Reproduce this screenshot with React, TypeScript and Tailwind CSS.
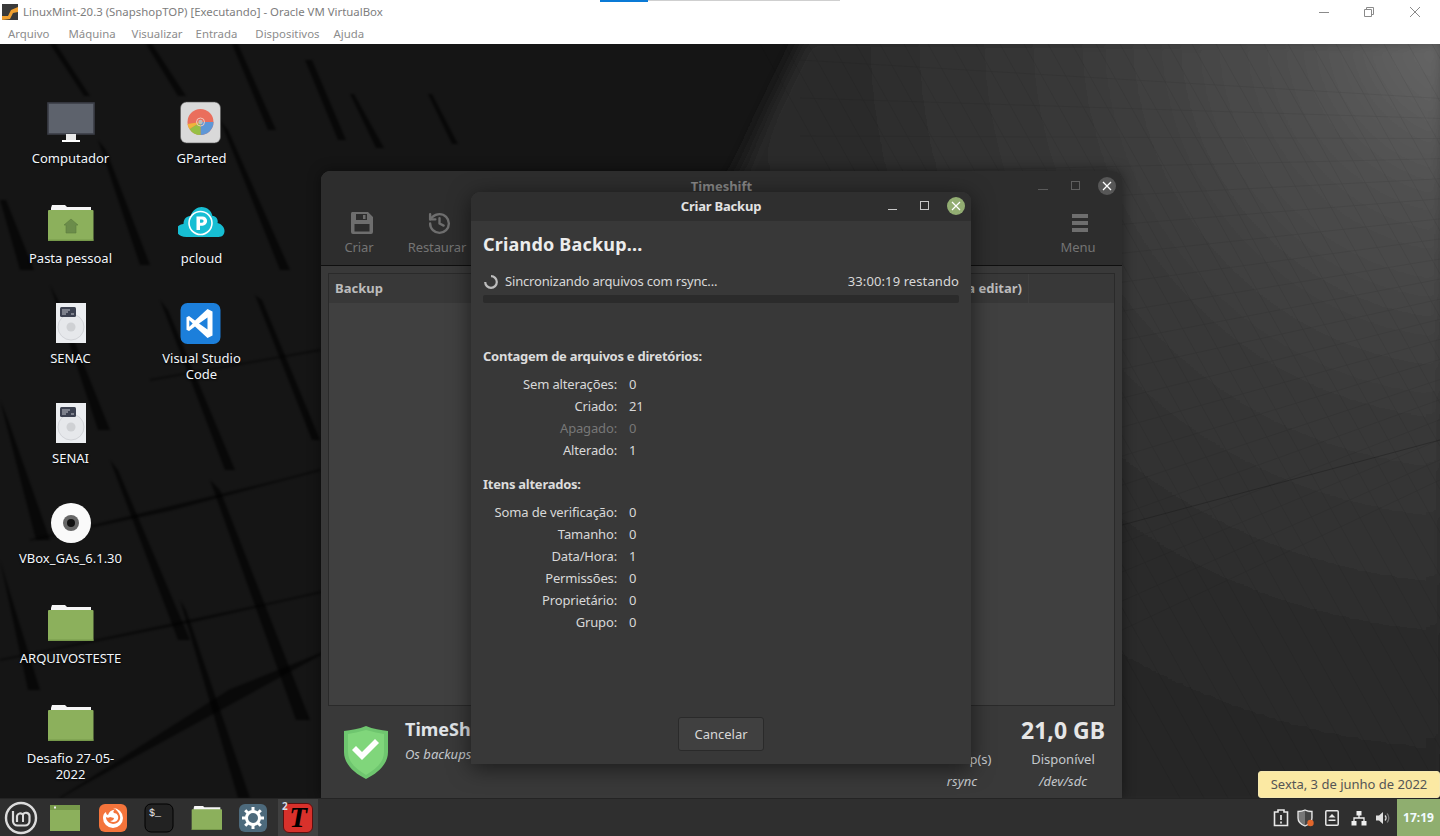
import { History } from "lucide-react";

const uiFont = "font-['Noto_Sans',sans-serif]";

// fan of lines on the lit part of the wallpaper
const fanLines = Array.from({ length: 20 }, (_, i) => {
  const y = 60 + i * 38;
  const slope = 0.06 - i * 0.028;
  return { y1: y, y2: y + slope * 640 };
});
const steepLines = Array.from({ length: 46 }, (_, i) => 760 + i * 24);

const shards = [
  "M50 44 L56 44 L90 96 L84 96Z",
  "M146 44 L152 44 L186 96 L178 96Z",
  "M350 94 L354 94 L384 148 L376 148Z",
  "M428 94 L432 94 L458 144 L452 144Z",
  "M232 44 L238 44 L276 130 L268 130Z",
  "M305 60 L312 60 L346 140 L338 140Z",
  "M0 200 L6 200 L34 270 L20 270Z",
  "M98 140 L106 150 L150 265 L140 265Z",
  "M220 120 L228 130 L290 270 L280 270Z",
  "M50 285 L58 300 L110 430 L98 430Z",
  "M160 300 L168 310 L235 470 L225 470Z",
  "M255 295 L262 300 L320 440 L312 440Z",
  "M0 400 L8 420 L50 540 L36 540Z",
  "M110 460 L118 470 L190 640 L178 640Z",
  "M210 480 L220 490 L310 720 L296 720Z",
  "M0 560 L6 580 L40 690 L28 690Z",
  "M180 600 L186 610 L250 798 L238 798Z",
];

function Wallpaper() {
  return (
    <svg className="absolute inset-0 h-full w-full" viewBox="0 44 1440 754" preserveAspectRatio="none">
      <defs>
        <radialGradient id="lit" gradientUnits="userSpaceOnUse" cx="1470" cy="30" r="760">
          <stop offset="0" stopColor="#6c6c6c" />
          <stop offset="0.2" stopColor="#525252" />
          <stop offset="0.5" stopColor="#3a3a3a" />
          <stop offset="0.8" stopColor="#2c2c2c" />
          <stop offset="1" stopColor="#272727" />
        </radialGradient>
        <filter id="edge">
          <feGaussianBlur stdDeviation="9" />
        </filter>
        <filter id="soft">
          <feGaussianBlur stdDeviation="0.9" />
        </filter>
      </defs>
      <rect x="0" y="44" width="1440" height="754" fill="#151515" />
      <path d="M806 34 L1450 34 L1450 810 L900 810 L600 400 L740 170Z" fill="url(#lit)" filter="url(#edge)" />
      <g filter="url(#soft)" fill="#060606" opacity="0.6">
        {shards.map((d) => (
          <path key={d} d={d} />
        ))}
      </g>
      <g stroke="#070707" strokeWidth="1.4" opacity="0.55" filter="url(#soft)">
        <path d="M0 660 L190 622 L330 590" />
        <path d="M60 798 L230 690 L330 650" />
        <path d="M30 540 L170 510 L320 470" />
        <path d="M150 380 L320 350" />
      </g>
      <g stroke="#000" strokeWidth="0.6" opacity="0.1">
        {fanLines.map((l) => (
          <line key={l.y1} x1="800" y1={l.y1} x2="1440" y2={l.y2} />
        ))}
        {steepLines.map((x) => (
          <line key={x} x1={x} y1="44" x2={x + 420} y2="798" />
        ))}
      </g>
      <path d="M1122 525 L1440 440" stroke="#111" strokeWidth="1" opacity="0.3" />
    </svg>
  );
}

function Folder({ home = false, size = 48 }: { home?: boolean; size?: number }) {
  return (
    <svg width={size} height={size} viewBox="0 0 48 48">
      <path d="M4 9 L5 6 H18 L20 8 H44 V12 H4Z" fill="#f6f6f6" />
      <rect x="1" y="11" width="45.5" height="31" rx="1" fill="#8cb05c" />
      <rect x="1" y="40.5" width="45.5" height="1.5" fill="#76994a" />
      {home && <path d="M24 20 L31 26 H29 V34 H19 V26 H17Z" fill="#6b8c4a" stroke="#5d7c3e" strokeWidth="0.6" />}
    </svg>
  );
}

function Monitor() {
  return (
    <svg width="48" height="48" viewBox="0 -3 48 48">
      <rect x="1" y="1" width="46" height="31" fill="#5d626c" stroke="#3b3e47" strokeWidth="1.6" />
      <path d="M19 32 H29 V38 H19Z" fill="#e9e9e9" />
      <rect x="15" y="38" width="18" height="2" fill="#fff" />
    </svg>
  );
}

function GParted() {
  return (
    <svg width="48" height="48" viewBox="1.5 0 48 48">
      <rect x="4" y="3" width="40" height="41" rx="6" fill="#d9d9d9" stroke="#555" strokeWidth="0.6" />
      <circle cx="24" cy="23" r="13" fill="#ea6e5c" />
      <path d="M24 23 L37 23 A13 13 0 0 1 24 36Z" fill="#5e97d6" />
      <path d="M24 23 L24 36 A13 13 0 0 1 13 30Z" fill="#98bf45" />
      <path d="M24 23 L13 30 A13 13 0 0 1 11 25Z" fill="#f0b43c" />
      <circle cx="24" cy="23" r="4" fill="none" stroke="#f3c6bc" strokeWidth="1" />
      <circle cx="24" cy="23" r="2.2" fill="#bdbdbd" />
    </svg>
  );
}

function PCloud() {
  return (
    <svg width="48" height="48" viewBox="1.5 -1 48 48">
      <path d="M10 37 C3 37 0 33 0 30 C0 27 3 24 7 24 C7 18 11 16 14 16 C16 10 21 7 25 7 C31 7 35 11 36 16 C40 16 42 20 41 23 C45 24 48 27 48 31 C48 34 46 37 42 37Z" fill="#17bed3" />
      <circle cx="24" cy="23" r="11.5" fill="none" stroke="#fff" strokeWidth="1.6" />
      <path d="M20 16.5 H26 A4.6 4.6 0 0 1 26 25.7 H23.5 V30 H20Z M23.5 19.5 V22.7 H25.5 A1.6 1.6 0 0 0 25.5 19.5Z" fill="#fff" fillRule="evenodd" />
    </svg>
  );
}

function Hdd() {
  return (
    <svg width="48" height="48" viewBox="0 -1 48 48">
      <rect x="9" y="3" width="30" height="40" fill="#eceef1" />
      <circle cx="24" cy="27" r="13" fill="#e6e8eb" stroke="#d2d4d8" strokeWidth="1" />
      <circle cx="24" cy="27" r="4.5" fill="#cfd1d4" />
      <rect x="13" y="7" width="16" height="10" rx="1.5" fill="#3c4150" />
      <path d="M15 10 H23 M15 12 H21 M15 14 H19 M24 14 H27" stroke="#dfe1e6" strokeWidth="0.8" />
    </svg>
  );
}

function VsCode() {
  return (
    <svg width="48" height="48" viewBox="1.5 -1 48 48">
      <rect x="4" y="3" width="40" height="41" rx="7" fill="#1c7fdb" />
      <path d="M31 9 L36 11.5 V35.5 L31 38 L18.5 26.5 L12.5 31 L10 29.7 V17.3 L12.5 16 L18.5 20.5Z M31 17.5 L22.5 23.5 L31 29.5Z M12.8 20.3 V26.7 L16.2 23.5Z" fill="#fff" fillRule="evenodd" />
    </svg>
  );
}

function Disc() {
  return (
    <svg width="48" height="48" viewBox="0 0 48 48">
      <circle cx="24" cy="24" r="20" fill="#fafafa" />
      <circle cx="24" cy="24" r="8" fill="#666" />
      <circle cx="24" cy="24" r="4" fill="#111" />
    </svg>
  );
}

const desktopIcons = [
  { label: "Computador", icon: <Monitor /> },
  { label: "Pasta pessoal", icon: <Folder home /> },
  { label: "SENAC", icon: <Hdd /> },
  { label: "SENAI", icon: <Hdd /> },
  { label: "VBox_GAs_6.1.30", icon: <Disc /> },
  { label: "ARQUIVOSTESTE", icon: <Folder /> },
  { label: "Desafio 27-05-2022", icon: <Folder /> },
  { label: "GParted", icon: <GParted /> },
  { label: "pcloud", icon: <PCloud /> },
  { label: "Visual Studio Code", icon: <VsCode /> },
];

function DesktopIcons() {
  return (
    <div className="relative grid w-fit grid-flow-col grid-cols-[131px_131px] grid-rows-[repeat(7,100px)] pl-[5px] pt-[55px]">
      {desktopIcons.map((item) => (
        <div key={item.label} className="flex flex-col items-center">
          {item.icon}
          <div className="mt-[3px] w-[106px] text-center text-[13px] leading-[16px] text-[#f2f6fb] [text-shadow:0_1px_2px_#000]">
            {item.label}
          </div>
        </div>
      ))}
    </div>
  );
}

function FloppyIcon() {
  return (
    <svg className="ml-[5px]" width="24" height="24" viewBox="0 0 24 24">
      <path
        d="M2 1 H18 L23 6 V21 A2 2 0 0 1 21 23 H3 A2 2 0 0 1 1 21 V3 A2 2 0 0 1 2 1Z M6 3 V9 H17 V3Z M13 4 H15.5 V8 H13Z M4.5 13 V20.5 H19.5 V13Z"
        fill="#6e6e6e"
        fillRule="evenodd"
      />
    </svg>
  );
}

function ToolButton({ label, icon, className }: { label: string; icon: React.ReactNode; className: string }) {
  return (
    <div className={`flex flex-col items-center ${className}`}>
      <div className="flex h-[24px] items-center">{icon}</div>
      <div className="mt-[4px] text-[13px] leading-[16px] tracking-[-0.1px] text-[#747474]">{label}</div>
    </div>
  );
}

function Stat({ value, label, sub, className }: { value?: string; label: string; sub: string; className: string }) {
  return (
    <div className={`flex flex-col items-center ${className}`}>
      <div className="h-[30px] text-[23px] font-bold leading-[30px] text-[#e6e6e6]">{value}</div>
      <div className="mt-[4px] text-[13px] leading-[20px] text-[#c4c8cc]">{label}</div>
      <div className="mt-[2px] text-[13px] italic leading-[20px] text-[#c4c8cc]">{sub}</div>
    </div>
  );
}

function TimeshiftWindow() {
  return (
    <div className="absolute left-[321px] top-[127px] flex h-[627px] w-[801px] flex-col overflow-hidden rounded-t-[9px] bg-[#393939] shadow-[0_0_14px_rgba(0,0,0,0.45)]">
      <div className="flex h-[95px] flex-col border-b border-[#0f0f0f] bg-[#2d2d2d]">
        <div className="relative flex h-[30px] items-center justify-center pt-[1px]">
          <span className="text-[13px] font-bold text-[#868686]">Timeshift</span>
          <span className="absolute left-[717px] top-[18px] h-px w-[10px] bg-[#5a5a5a]" />
          <span className="absolute left-[750px] top-[10px] h-[9px] w-[9px] border border-[#5f5f5f]" />
          <span className="absolute left-[777px] top-[6px] flex h-[18px] w-[18px] items-center justify-center rounded-full bg-[#575757]">
            <svg width="10" height="10" viewBox="0 0 10 10">
              <path d="M1 1 L9 9 M9 1 L1 9" stroke="#fff" strokeWidth="1.3" />
            </svg>
          </span>
        </div>
        <div className="flex pt-[10px]">
          <ToolButton label="Criar" icon={<FloppyIcon />} className="ml-[18px] w-[40px]" />
          <ToolButton
            label="Restaurar"
            icon={<History className="ml-[5px]" size={25} strokeWidth={2.3} color="#6e6e6e" />}
            className="ml-[20px] w-[76px]"
          />
          <ToolButton
            label="Menu"
            icon={
              <svg className="ml-[4px]" width="24" height="24" viewBox="0 0 24 24">
                <path d="M4 3 H20 V7 H4Z M4 10 H20 V14 H4Z M4 17 H20 V21 H4Z" fill="#6e6e6e" />
              </svg>
            }
            className="ml-[573px] w-[60px]"
          />
        </div>
      </div>
      <div className="mx-[7px] mt-[7px] flex h-[433px] flex-col border border-[#2a2a2a] bg-[#404040]">
        <div className="flex h-[29px] items-center justify-between whitespace-nowrap bg-[#383838] pl-[6px] text-[13px] font-bold text-[#bcbcbc]">
          <span>Backup</span>
          <span className="mr-[85px] border-r border-[#3e3e3e] pr-[6px] leading-[29px]">a editar)</span>
        </div>
      </div>
      <div className="relative flex flex-1 items-start">
        <svg className="ml-[22px] mt-[20px]" width="46" height="53" viewBox="0 0 46 53">
          <path d="M23 0 C30 3 38 4 45 5 V26 C45 38 35 47 23 53 C11 47 1 38 1 26 V5 C8 4 16 3 23 0Z" fill="#6fc66f" />
          <path d="M23 4 C30 6 36 7 41 8 V26 C41 36 33 43 23 49 C13 43 5 36 5 26 V8 C10 7 16 6 23 4Z" fill="#80d67b" />
          <path d="M9 24 L13 20 L19 26 L32 13 L36 17 L19 34Z" fill="#fff" />
        </svg>
        <div className="ml-[16px] mt-[10px]">
          <div className="text-[18px] font-bold leading-[26px] text-[#e0e4e8]">TimeShift</div>
          <div className="mt-[3px] text-[13px] italic leading-[18px] text-[#c4c8cc]">Os backups</div>
        </div>
        <div className="absolute left-[600px] top-[9px] flex">
          <Stat label="Backup(s)" sub="rsync" className="w-[82px]" />
          <Stat value="21,0 GB" label="Disponível" sub="/dev/sdc" className="ml-[10px] w-[100px]" />
        </div>
      </div>
    </div>
  );
}

const countRows = [
  { label: "Sem alterações:", value: "0" },
  { label: "Criado:", value: "21" },
  { label: "Apagado:", value: "0", dim: true },
  { label: "Alterado:", value: "1" },
];

const changedRows = [
  { label: "Soma de verificação:", value: "0" },
  { label: "Tamanho:", value: "0" },
  { label: "Data/Hora:", value: "1" },
  { label: "Permissões:", value: "0" },
  { label: "Proprietário:", value: "0" },
  { label: "Grupo:", value: "0" },
];

function StatRows({ rows }: { rows: { label: string; value: string; dim?: boolean }[] }) {
  return (
    <div className="flex flex-col">
      {rows.map((row) => (
        <div
          key={row.label}
          className={`flex h-[22px] items-center text-[13px] tracking-[-0.15px] ${row.dim ? "text-[#777777]" : "text-[#d8d8d8]"}`}
        >
          <span className="w-[134px] whitespace-nowrap text-right">{row.label}</span>
          <span className="ml-[12px]">{row.value}</span>
        </div>
      ))}
    </div>
  );
}

function BackupDialog() {
  return (
    <div className="absolute left-[471px] top-[148px] flex h-[572px] w-[500px] flex-col overflow-hidden rounded-t-[9px] bg-[#383838] shadow-[0_4px_22px_rgba(0,0,0,0.55)]">
      <div className="relative flex h-[29px] shrink-0 items-center justify-center bg-[#2f2f2f]">
        <span className="text-[13px] font-bold tracking-[-0.2px] text-[#e2e2e2]">Criar Backup</span>
        <span className="absolute left-[417px] top-[17px] h-px w-[9px] bg-[#c8c8c8]" />
        <span className="absolute left-[449px] top-[9px] h-[9px] w-[9px] border border-[#c8c8c8]" />
        <span className="absolute left-[476px] top-[5px] flex h-[18px] w-[18px] items-center justify-center rounded-full bg-[#92ad72]">
          <svg width="10" height="10" viewBox="0 0 10 10">
            <path d="M1 1 L9 9 M9 1 L1 9" stroke="#fff" strokeWidth="1.2" />
          </svg>
        </span>
      </div>
      <div className="flex flex-1 flex-col px-[12px]">
        <h1 className="mt-[10px] text-[18px] font-bold leading-[26px] tracking-[0.2px] text-[#ececec]">Criando Backup...</h1>
        <div className="mt-[15px] flex h-[20px] items-center text-[13px] text-[#d8d8d8]">
          <svg width="14" height="14" viewBox="0 0 14 14" className="ml-[1px]">
            <path d="M7 1.2 A5.8 5.8 0 1 1 1.2 7" fill="none" stroke="#bdbdbd" strokeWidth="2.2" />
          </svg>
          <span className="ml-[7px] tracking-[-0.17px]">Sincronizando arquivos com rsync...</span>
          <span className="ml-auto tracking-[0.1px]">33:00:19 restando</span>
        </div>
        <div className="mt-[3px] h-[8px] w-full rounded-[2px] bg-[#2b2b2b]" />
        <div className="mt-[44px] text-[13px] font-bold leading-[18px] tracking-[-0.25px] text-[#dcdcdc]">Contagem de arquivos e diretórios:</div>
        <div className="mt-[9px]">
          <StatRows rows={countRows} />
        </div>
        <div className="mt-[13px] text-[13px] font-bold leading-[18px] tracking-[-0.25px] text-[#dcdcdc]">Itens alterados:</div>
        <div className="mt-[9px]">
          <StatRows rows={changedRows} />
        </div>
        <div className="mt-auto flex justify-center pb-[13px]">
          <button className="h-[34px] w-[86px] rounded-[3px] border border-[#2a2a2a] bg-[#404040] pt-px text-[13px] text-[#d8d8d8]">
            Cancelar
          </button>
        </div>
      </div>
    </div>
  );
}

function MintLogo() {
  return (
    <svg width="34" height="34" viewBox="0 0 34 34">
      <circle cx="17" cy="17" r="15" fill="none" stroke="#dcdcdc" strokeWidth="2.4" />
      <path
        d="M9 10 V20 A4.5 4.5 0 0 0 13.5 24.5 H21 A4.5 4.5 0 0 0 25.5 20 V15 A3.5 3.5 0 0 0 19 13.5 A3.5 3.5 0 0 0 13 15 V21"
        fill="none"
        stroke="#dcdcdc"
        strokeWidth="2.2"
      />
      <path d="M19 14 V21" stroke="#dcdcdc" strokeWidth="2" />
    </svg>
  );
}

function PanelIcons() {
  return (
    <div className="flex h-full items-center">
      <div className="ml-[4px]">
        <MintLogo />
      </div>
      <svg className="ml-[11px]" width="32" height="28" viewBox="0 0 32 28">
        <rect x="1" y="1" width="30" height="26" fill="#8cb05c" />
        <rect x="1" y="1" width="30" height="5" fill="#76994a" />
        <rect x="5" y="2.5" width="2" height="2" fill="#eee" />
      </svg>
      <svg className="ml-[17px]" width="30" height="30" viewBox="0 0 30 30">
        <rect x="1" y="1" width="28" height="28" rx="6" fill="#f4743b" />
        <path d="M15 5 A10 10 0 1 1 5 15 C5 12 6 10 8 9 C8 11 9 12 10 12 C11 9 13 7 17 6.5 C15 8 15 9 16 10 C19 10 21 13 20 16 C19 19 15 20 12 18 C14 18 16 17 16 15 L12 14 C11 15 9 15 8 14 C8 17 10 20 15 21 C20 21 23 17 22 13 C21 9 18 6 15 5Z" fill="#fff" />
      </svg>
      <svg className="ml-[16px]" width="30" height="30" viewBox="0 0 30 30">
        <rect x="1" y="1" width="28" height="28" rx="6" fill="#222" stroke="#000" />
        <text x="5" y="13" fontSize="10" fill="#eeeeee" fontFamily="'Liberation Mono', monospace">$_</text>
      </svg>
      <div className="ml-[17px]">
        <Folder size={32} />
      </div>
      <svg className="ml-[15px]" width="30" height="30" viewBox="0 0 30 30">
        <rect x="1" y="1" width="28" height="28" rx="6" fill="#4d6a7c" />
        <circle cx="15" cy="15" r="6.5" fill="none" stroke="#fff" strokeWidth="3" />
        <path d="M15 4 V9 M15 21 V26 M4 15 H9 M21 15 H26 M7.2 7.2 L10.8 10.8 M19.2 19.2 L22.8 22.8 M22.8 7.2 L19.2 10.8 M10.8 19.2 L7.2 22.8" stroke="#fff" strokeWidth="3" />
      </svg>
      <div className="relative ml-[10px] flex h-full w-[40px] items-center justify-center bg-[#404040]">
        <span className="absolute left-[4px] top-[1px] text-[10px] font-bold leading-[12px] text-[#d5dde8]">2</span>
        <div className="flex h-[30px] w-[30px] items-center justify-center rounded-[6px] border border-[#5a1010] bg-[#d8312b] font-['Liberation_Serif',serif] text-[29px] font-bold italic leading-none text-black">
          T
        </div>
      </div>
    </div>
  );
}

function TrayIcons() {
  return (
    <div className="flex h-full items-center">
      <svg width="16" height="18" viewBox="0 0 16 18">
        <path d="M1.5 3 H5 V1 H11 V3 H14.5 V16.5 H1.5Z" fill="none" stroke="#e8e8e8" strokeWidth="1.6" />
        <path d="M8 6 V11 M8 12.5 V14.5" stroke="#e8e8e8" strokeWidth="1.7" />
      </svg>
      <svg className="ml-[8px]" width="18" height="18" viewBox="0 0 18 18">
        <path d="M8 1 C10 2 13 2.5 15 2.5 V9 C15 13 12 15.5 8 17 C4 15.5 1 13 1 9 V2.5 C3 2.5 6 2 8 1Z" fill="#777" stroke="#e8e8e8" strokeWidth="1.3" />
        <path d="M8 2 V16 C11.5 14.5 14 12.5 14 9 V3.5 C12 3.5 10 3 8 2Z" fill="#444" />
        <circle cx="13.5" cy="14" r="3.2" fill="#e2672c" />
      </svg>
      <svg className="ml-[10px]" width="14" height="16" viewBox="0 0 14 16">
        <rect x="0.8" y="0.8" width="12.4" height="14.4" rx="1" fill="none" stroke="#e8e8e8" strokeWidth="1.5" />
        <path d="M7 4 L10.5 7.5 H3.5Z M3.5 9.5 H10.5 V11 H3.5Z" fill="#e8e8e8" />
      </svg>
      <svg className="ml-[12px]" width="16" height="16" viewBox="0 0 16 16">
        <path d="M5.5 1 H10.5 V5.5 H5.5Z M0.5 11 H5.5 V15.5 H0.5Z M10.5 11 H15.5 V15.5 H10.5Z" fill="#f0f0f0" />
        <path d="M8 5 V8 M3 11 V8 H13 V11" stroke="#f0f0f0" fill="none" strokeWidth="1.3" />
      </svg>
      <svg className="ml-[8px]" width="16" height="16" viewBox="0 0 16 16">
        <path d="M1 5.5 H4 L8 2 V14 L4 10.5 H1Z" fill="#dfdfdf" />
        <path d="M10 5.5 A3.5 3.5 0 0 1 10 10.5" fill="none" stroke="#dfdfdf" strokeWidth="1.3" />
        <path d="M12 3.5 A6.5 6.5 0 0 1 12 12.5" fill="none" stroke="#777" strokeWidth="1.3" />
      </svg>
      <div className="ml-[6px] flex h-full w-[43px] items-center justify-center bg-[#8fae6f] text-[12px] font-bold text-[#f2fbff]">
        17:19
      </div>
    </div>
  );
}

export default function App() {
  return (
    <div className={`relative flex h-[836px] w-[1440px] flex-col overflow-hidden bg-[#151515] ${uiFont}`}>
      {/* mini toolbar sliver at the very top */}
      <div className="absolute left-[600px] top-0 h-[2px] w-[48px] bg-[#0a7ad6]" />
      <div className="absolute left-[648px] top-0 h-px w-[192px] bg-[#cfcfcf]" />

      <header className="flex h-[44px] shrink-0 flex-col bg-white">
        <div className="flex h-[24px] items-center pl-[2px]">
          <svg width="16" height="16" viewBox="0 0 16 16">
            <rect x="0" y="0" width="16" height="16" fill="#3a3a3a" />
            <path d="M0 12 L6 12 L9 6 L16 3 V8 L11 9 L8 15 L0 16Z" fill="#f0a030" />
          </svg>
          <span className="ml-[5px] text-[11.4px] text-[#7d7d7d]">LinuxMint-20.3 (SnapshopTOP) [Executando] - Oracle VM VirtualBox</span>
          <div className="ml-auto flex items-center">
            <span className="h-px w-[10px] bg-[#8a8a8a]" />
            <svg className="ml-[35px]" width="10" height="10" viewBox="0 0 10 10">
              <path d="M0.5 2.5 H7.5 V9.5 H0.5Z M2.5 2.5 V0.5 H9.5 V7.5 H7.5" fill="none" stroke="#8a8a8a" />
            </svg>
            <svg className="ml-[36px] mr-[20px]" width="10" height="10" viewBox="0 0 10 10">
              <path d="M0 0 L10 10 M10 0 L0 10" stroke="#8a8a8a" />
            </svg>
          </div>
        </div>
        <nav className="flex h-[20px] items-center text-[11.4px] text-[#8c8c8c]">
          <span className="ml-[8px]">Arquivo</span>
          <span className="ml-[19px]">Máquina</span>
          <span className="ml-[16px]">Visualizar</span>
          <span className="ml-[13px]">Entrada</span>
          <span className="ml-[18px]">Dispositivos</span>
          <span className="ml-[14px]">Ajuda</span>
        </nav>
      </header>

      <main className="relative flex-1 overflow-hidden">
        <Wallpaper />
        <DesktopIcons />
        <TimeshiftWindow />
        <BackupDialog />
      </main>

      <footer className="relative flex h-[38px] shrink-0 items-center justify-between border-t border-[#242424] bg-[#2f2f2f]">
        <PanelIcons />
        <TrayIcons />
        <div className="absolute bottom-[38px] right-0 flex h-[27px] w-[182px] items-center justify-center rounded-[3px] border border-[#f5e8b0] bg-[#fbe9a3] text-[13px] text-[#555555]">
          Sexta, 3 de junho de 2022
        </div>
      </footer>
    </div>
  );
}
